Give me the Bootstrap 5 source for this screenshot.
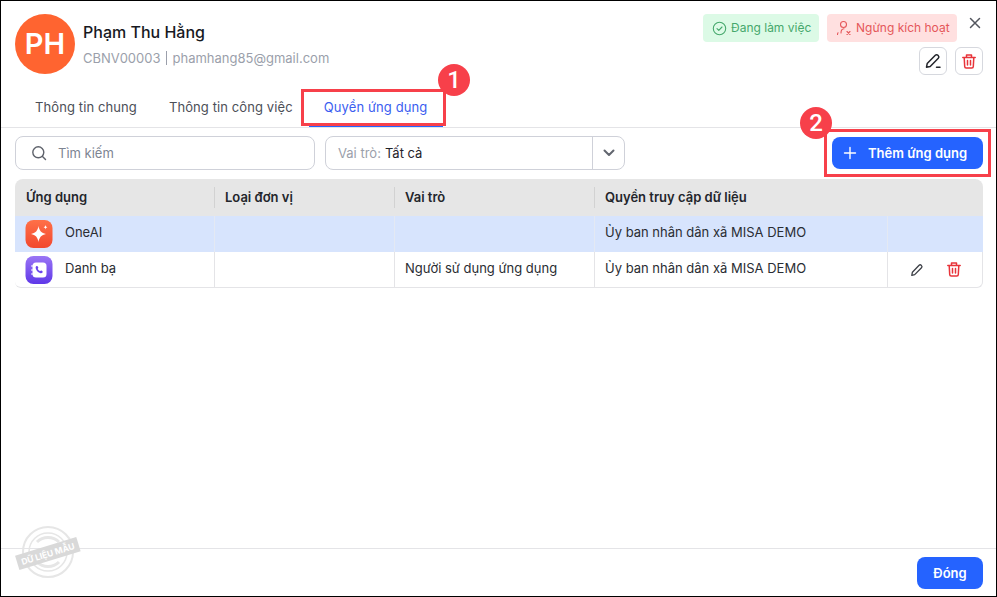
<!DOCTYPE html>
<html lang="vi">
<head>
<meta charset="utf-8">
<title>Quyền ứng dụng</title>
<link href="https://cdn.jsdelivr.net/npm/bootstrap@5.3.0/dist/css/bootstrap.min.css" rel="stylesheet">
<style>
html,body{height:100%;margin:0;overflow:hidden}
body{font-family:Inter,"Liberation Sans",sans-serif;color:#1f2229;font-size:13px;background:#fff}
.dlg{position:relative;width:997px;height:597px;border:1px solid #000;display:flex;flex-direction:column;background:#fff}
.top-area{height:127px;padding:13px 13px 0 14px;border-bottom:1px solid #e4e4e7;display:flex;flex-direction:column}
.head-row{display:flex;justify-content:space-between;height:72px}
.ava{width:60px;height:60px;border-radius:50%;background:#ff6430;color:#fff;font-size:29px;font-weight:600;display:flex;align-items:center;justify-content:center}
.who{margin-left:8px;padding-top:8px}
.nm{font-size:16px;font-weight:500;line-height:20px;color:#17191f}
.sub{font-size:13px;color:#9b9fab;line-height:16px;margin-top:8px;display:flex;align-items:center}
.sep{display:inline-block;width:1px;height:14px;background:#9b9fab;margin:0 5px 0 6px}
.acts{display:flex;flex-direction:column;align-items:flex-end;width:290px}
.st-row{display:flex;align-items:flex-start;gap:8px;height:33px}
.pill{height:28px;border-radius:4px;font-size:12px;display:flex;align-items:center;padding:0 0 0 9px;white-space:nowrap;overflow:hidden}
.pill-ok{background:#dcfae6;color:#46a86c;width:116px}
.pill-no{background:#ffe0e0;color:#e5575a;width:130px}
.x-btn{width:26px;height:26px;margin:-4px -5px 0 -3px;display:flex;align-items:center;justify-content:center}
.ic-row{display:flex;gap:8px}
.ic-btn{width:28px;height:28px;border:1px solid #d6d8de;border-radius:6px;display:flex;align-items:center;justify-content:center;background:#fff;padding:0}
.tabs-row{display:flex;margin-top:2px}
.tb{font-size:13px;letter-spacing:.1px;color:#4c4f57;line-height:40px;height:38px;white-space:nowrap}
.tb1{padding:0 15px 0 20px}
.tb2{padding:0 16px 0 17px}
.tb3{color:#3b5ef0;border-bottom:3px solid #2563ff;padding:0 16px 0 15px;height:40px}
.tool{display:flex;padding:8px 13px 0 14px;height:51px}
.fbox{height:34px;border:1px solid #cfd1d9;border-radius:8px;display:flex;align-items:center;background:#fff}
.srch{width:300px;padding-left:15px;color:#7d8492}
.srch svg{margin-right:11px}
.srch span,.sel .lbl,.sel .val{padding-top:2px}
.sel{width:300px;margin-left:10px;padding-left:12px}
.sel .lbl{color:#9b9fab;margin-right:4px}
.sel .val{color:#1f2229;flex:1}
.sel .car{width:32px;height:32px;border-left:1px solid #cfd1d9;display:flex;align-items:center;justify-content:center}
.add{margin-left:auto;width:151px;height:32px;margin-top:1px;border:0;border-radius:8px;background:#2563ff;color:#fff;font-weight:600;font-size:13px;display:flex;align-items:center;padding:2px 0 0 11px}
.add svg{margin:-2px 11px 0 0}
.tw{margin:0 13px 0 14px}
table.grid{width:968px;table-layout:fixed;border-collapse:separate;border-spacing:0;margin:0}
.grid th{height:37px;background:#e6e6e6;font-weight:600;font-size:13px;color:#23252b;padding:0 0 0 11px;position:relative}
.grid th:first-child{border-top-left-radius:8px}
.grid th:last-child{border-top-right-radius:8px}
.grid th+th:not(:last-child)::before{content:"";position:absolute;left:0;top:8px;bottom:8px;width:1px;background:#d2d2d2}
.grid td{height:36px;padding:0 0 2px 10px;font-size:13px;color:#2a2d33;border-left:1px solid #e4e4e7;border-bottom:1px solid #e4e4e7;vertical-align:middle}
.grid td:first-child{border-left:0}
.grid tr.hl td{background:#d7e4fd;border-bottom:0;border-left-color:#e4e9f3}
.grid tr:last-child td:first-child{border-bottom-left-radius:6px}
.grid tr:last-child td:last-child{border-bottom-right-radius:6px;border-right:1px solid #e4e4e7}
.app{display:flex;align-items:center;gap:12px}
.app svg,.rowacts svg{transform:translateY(1px)}
.rowacts{display:flex;gap:21px;padding-left:11px;align-items:center}
.spacer{flex:1}
.foot{height:48px;border-top:1px solid #e4e4e7;display:flex;justify-content:flex-end;padding:8px 13px 0 0}
.close-b{width:66px;height:32px;border:0;border-radius:8px;background:#2563ff;color:#fff;font-weight:600;font-size:13px;padding:2px 0 0}
.mark1{position:absolute;border:3px solid #f7404a;pointer-events:none}
.num{position:absolute;width:32px;height:32px;border-radius:50%;background:#f7404a;color:#fff;font-size:24px;font-weight:500;display:flex;align-items:center;justify-content:center;font-family:Roboto,"Liberation Sans",sans-serif}
.stamp{position:absolute;left:14px;top:522px}
.stamp text{font-family:Inter,"Liberation Sans",sans-serif;font-weight:700;font-size:8.5px;fill:#fff}
.c1{width:199px}.c2{width:180px}.c3{width:200px}.c4{width:293px}.c5{width:96px}
.mk-a{left:300px;top:88px;width:145px;height:37px}
.nm-a{left:437px;top:63px}
.mk-b{left:823px;top:128px;width:167px;height:48px}
.nm-b{left:799px;top:106px}
</style>
</head>
<body>
<div class="dlg">
  <div class="top-area">
    <div class="head-row">
      <div class="d-flex">
        <div class="ava">PH</div>
        <div class="who">
          <div class="nm">Phạm Thu Hằng</div>
          <div class="sub"><span>CBNV00003</span><span class="sep"></span><span>phamhang85@gmail.com</span></div>
        </div>
      </div>
      <div class="acts">
        <div class="st-row">
          <div class="pill pill-ok">
            <svg width="15" height="15" viewBox="0 0 15 15" fill="none" stroke="#46a86c" stroke-width="1.1" class="me-1"><circle cx="7.5" cy="7.5" r="6.2"/><path d="M5 7.6l1.800 1.800L10 6" stroke-linecap="round" stroke-linejoin="round"/></svg>
            <span>Đang làm việc</span>
          </div>
          <div class="pill pill-no">
            <svg width="16" height="16" viewBox="0 0 16 16" fill="none" stroke="#e5575a" stroke-width="1.1" class="me-1"><circle cx="7.500" cy="4.500" r="3"/><path d="M5 13c0-2.500 1-4 3-4.200M1.500 14.500c0-.6.200-1.200.5-1.700" stroke-linecap="round"/><path d="M11 11.500l3 3M14 11.500l-3 3" stroke-linecap="round"/></svg>
            <span>Ngừng kích hoạt</span>
          </div>
          <div class="x-btn"><svg width="12" height="12" viewBox="0 0 12 12" stroke="#53565e" stroke-width="1.5" fill="none" stroke-linecap="round"><path d="M1.500 1.500l9 9M10.500 1.500l-9 9"/></svg></div>
        </div>
        <div class="ic-row">
          <button class="ic-btn" type="button" aria-label="Sửa"><svg width="18" height="18" viewBox="0 0 18 18" fill="none" stroke="#23252b" stroke-width="1.500" stroke-linejoin="round" stroke-linecap="round"><path d="M2.500 15.200l.7-3.600 8.100-8.300a1.800 1.800 0 0 1 2.600 0l.4.400a1.800 1.800 0 0 1 0 2.500L6.200 14.500z"/><path d="M12.500 15.200h3.500"/></svg></button>
          <button class="ic-btn" type="button" aria-label="Xóa"><svg width="16" height="17" viewBox="0 0 16 17" fill="none" stroke="#e8343a" stroke-width="1.500" stroke-linejoin="round" stroke-linecap="round"><path d="M1.800 4.500h12.400M5.500 4.500V2h5v2.500M3.200 4.500l.5 9a1.500 1.500 0 0 0 1.500 1.500h5.600a1.500 1.500 0 0 0 1.500-1.500l.5-9M6.500 7.500v4.500M9.500 7.500v4.500"/></svg></button>
        </div>
      </div>
    </div>
    <div class="tabs-row">
      <div class="tb tb1">Thông tin chung</div>
      <div class="tb tb2">Thông tin công việc</div>
      <div class="tb tb3">Quyền ứng dụng</div>
    </div>
  </div>
  <div class="tool">
    <div class="fbox srch">
      <svg width="16" height="16" viewBox="0 0 16 16" fill="none" stroke="#5e626b" stroke-width="1.400" stroke-linecap="round"><circle cx="7.300" cy="7.300" r="5.500"/><path d="M11.500 11.500l3 3"/></svg>
      <span>Tìm kiếm</span>
    </div>
    <div class="fbox sel">
      <span class="lbl">Vai trò:</span><span class="val">Tất cả</span>
      <span class="car"><svg width="12" height="8" viewBox="0 0 12 8" fill="none" stroke="#62666f" stroke-width="2" stroke-linecap="round" stroke-linejoin="round"><path d="M1.500 1.500L6 6l4.500-4.500"/></svg></span>
    </div>
    <button class="add" type="button">
      <svg width="14" height="14" viewBox="0 0 14 14" stroke="#fff" stroke-width="1.400" stroke-linecap="round" fill="none"><path d="M7 1.500v11M1.500 7h11"/></svg>
      Thêm ứng dụng
    </button>
  </div>
  <div class="tw">
    <table class="grid">
      <colgroup><col class="c1"><col class="c2"><col class="c3"><col class="c4"><col class="c5"></colgroup>
      <thead><tr><th>Ứng dụng</th><th>Loại đơn vị</th><th>Vai trò</th><th>Quyền truy cập dữ liệu</th><th></th></tr></thead>
      <tbody>
        <tr class="hl">
          <td><div class="app">
            <svg width="28" height="28" viewBox="0 0 27 28"><defs><linearGradient id="g1" x1="0" y1="0" x2="0" y2="1"><stop offset="0" stop-color="#ff7048"/><stop offset="1" stop-color="#f2482f"/></linearGradient></defs><rect width="27" height="28" rx="8" fill="url(#g1)"/><path d="M13 6c.8 4.700 2.900 7 7.500 8-4.600 1-6.700 3.300-7.500 8-.8-4.700-2.900-7-7.500-8 4.600-1 6.700-3.300 7.500-8z" fill="#fff"/><path d="M20 5c.2 1.300.8 1.900 2 2.200-1.200.3-1.800.9-2 2.200-.2-1.300-.8-1.900-2-2.200 1.200-.3 1.800-.9 2-2.200z" fill="#fff"/></svg>
            <span>OneAI</span></div></td>
          <td></td><td></td><td>Ủy ban nhân dân xã MISA DEMO</td><td></td>
        </tr>
        <tr>
          <td><div class="app">
            <svg width="28" height="28" viewBox="0 0 27 28"><defs><linearGradient id="g2" x1="0" y1="0" x2="0" y2="1"><stop offset="0" stop-color="#9a75f5"/><stop offset="1" stop-color="#5f38e8"/></linearGradient></defs><rect width="27" height="28" rx="8" fill="url(#g2)"/><rect x="7" y="6.500" width="14" height="15" rx="3.500" fill="#fff"/><path d="M5.500 10h2M5.500 14h2M5.500 18h2" stroke="#fff" stroke-width="1.200"/><path d="M11.200 10c.9-.4 1.300.8 1.600 1.500.2.600-.7 1-.5 1.500.4 1 1.200 1.700 2 2.100.5.200 1-.7 1.500-.5.700.3 1.800.9 1.400 1.700-.5 1-1.700 1.200-2.700.8-2.200-.9-3.800-2.700-4.300-4.900-.2-1 .2-1.900 1-2.200z" fill="#6a43ec"/></svg>
            <span>Danh bạ</span></div></td>
          <td></td><td>Người sử dụng ứng dụng</td><td>Ủy ban nhân dân xã MISA DEMO</td>
          <td><div class="rowacts">
            <svg width="16" height="16" viewBox="0 0 16 16" fill="none" stroke="#3c3f46" stroke-width="1.300" stroke-linejoin="round"><path d="M2.800 13.300l.6-3.100 6.700-6.900a1.500 1.500 0 0 1 2.100 0l.3.300a1.500 1.500 0 0 1 0 2.100l-6.800 6.900z"/></svg>
            <svg width="16" height="17" viewBox="0 0 16 17" fill="none" stroke="#e8343a" stroke-width="1.500" stroke-linejoin="round" stroke-linecap="round"><path d="M1.800 4.500h12.400M5.500 4.500V2h5v2.500M3.200 4.500l.5 9a1.500 1.500 0 0 0 1.500 1.500h5.600a1.500 1.500 0 0 0 1.500-1.500l.5-9M6.500 7.500v4.500M9.500 7.500v4.500"/></svg>
          </div></td>
        </tr>
      </tbody>
    </table>
  </div>
  <div class="spacer"></div>
  <div class="foot"><button class="close-b" type="button">Đóng</button></div>

  <div class="mark1 mk-a"></div>
  <div class="num nm-a">1</div>
  <div class="mark1 mk-b"></div>
  <div class="num nm-b">2</div>

  <svg class="stamp" width="66" height="60" viewBox="0 0 66 60" fill="none">
    <g stroke="#e6e6e6">
      <circle cx="33" cy="29" r="25" stroke-width="2"/>
      <circle cx="33" cy="29" r="19" stroke-width="1.500"/>
      <path d="M22 19c6-6 16-6 22 0M22 39c6 6 16 6 22 0" stroke-width="3"/>
    </g>
    <g transform="rotate(-17 33 31)">
      <rect x="1" y="23" width="64" height="15" fill="#d9d9d9"/>
      <text x="33" y="34" text-anchor="middle">DỮ LIỆU MẪU</text>
    </g>
  </svg>
</div>
<script src="https://cdn.jsdelivr.net/npm/bootstrap@5.3.0/dist/js/bootstrap.bundle.min.js"></script>
</body>
</html>
